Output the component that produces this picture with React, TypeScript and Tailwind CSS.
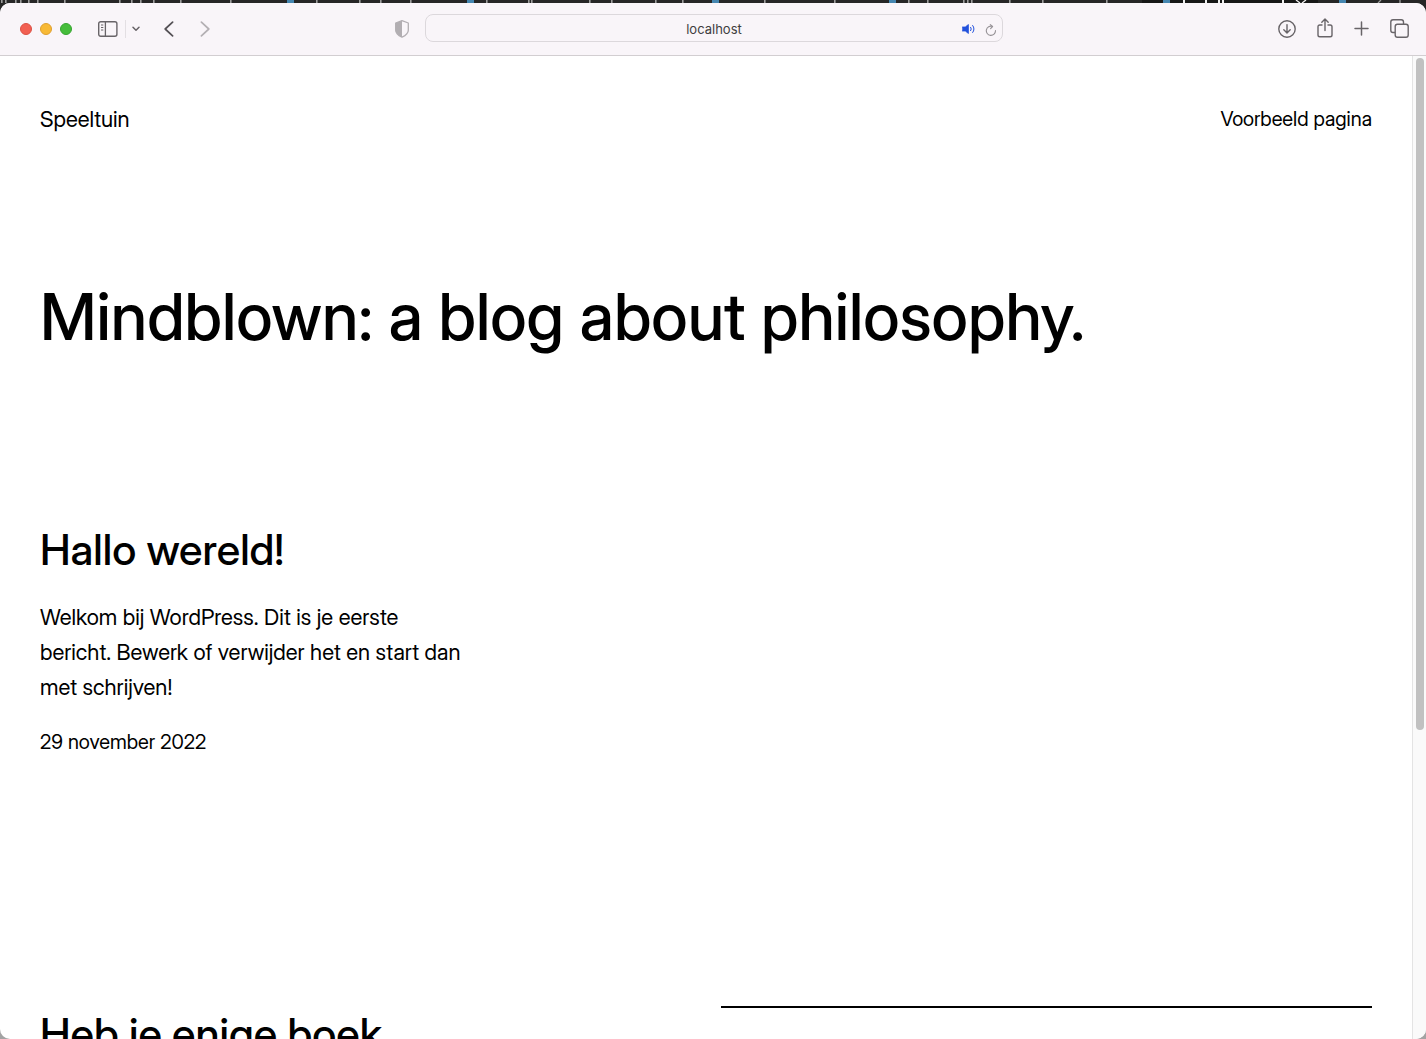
import React from 'react';

const FAVICONS = [287, 467, 712, 889, 1163, 1339];
const TICKS = [
  1, 5, 15, 20, 28, 37, 64, 119, 131, 140, 153, 180, 230, 316, 359, 380, 410, 486, 528, 531, 589, 611, 655, 682,
  764, 834, 908, 927, 963, 967, 971, 1009, 1042, 1106,
];
const ACTIVE_TICKS = [1183, 1205, 1218, 1222, 1282];

function TabStrip() {
  return (
    <svg className="h-[3px] w-full shrink-0" viewBox="0 0 1426 3" preserveAspectRatio="none" aria-hidden="true">
      <rect width="1426" height="3" fill="#262626" />
      <rect x="1142" width="176" height="3" fill="#171717" />
      {FAVICONS.map((x) => <rect key={x} x={x} width="7" height="3" fill="#4586b0" />)}
      {TICKS.map((x) => <rect key={x} x={x} width="1.6" height="3" fill="#9c9c9c" />)}
      {ACTIVE_TICKS.map((x) => <rect key={x} x={x} width="2" height="3" fill="#f0f0f0" />)}
      <path d="M1296 0l4 3M1306 0l-4 3" stroke="#f0f0f0" strokeWidth="1.3" />
      <path d="M1381 0l-3 3M1400 0v3" stroke="#9c9c9c" strokeWidth="1.3" />
    </svg>
  );
}

function Toolbar() {
  return (
    <header className="grid h-[53px] shrink-0 grid-cols-[1fr_578px_1fr] items-center border-b border-[#d2ced1] bg-[#f9f5f9] pl-0.5 text-[#686468]">
      <div className="flex items-center justify-between pr-4 pl-[18px]">
        <div className="flex items-center">
          <div className="flex gap-2">
            <button aria-label="Close" className="size-3 rounded-full border border-[#dc5044] bg-[#f25f52]" />
            <button aria-label="Minimize" className="size-3 rounded-full border border-[#dfa02f] bg-[#f8b935]" />
            <button aria-label="Zoom" className="size-3 rounded-full border border-[#36a530] bg-[#46bd3b]" />
          </div>
          <button aria-label="Sidebar" className="ml-[26px]">
            <svg width="20" height="16" viewBox="0 0 20 16" fill="none" stroke="currentColor" className="block">
              <rect x="0.7" y="0.7" width="18.2" height="14.6" rx="2" strokeWidth="1.4" />
              <path d="M7.4 1v14" strokeWidth="1.3" />
              <path d="M3 4h2.3M3 6.5h2.3M3 9h2.3" strokeWidth="1" />
            </svg>
          </button>
          <span className="ml-[7px] h-[18px] w-px bg-[#e3dfe3]" />
          <button aria-label="Tab groups" className="ml-1.5">
            <svg width="8" height="6" viewBox="0 0 8 6" fill="none" stroke="currentColor" strokeWidth="1.5" strokeLinecap="round" strokeLinejoin="round" className="block">
              <path d="M1 1.3l3 3 3-3" />
            </svg>
          </button>
          <button aria-label="Back" className="ml-6">
            <svg width="10" height="16" viewBox="0 0 10 16" fill="none" stroke="#555156" strokeWidth="1.7" strokeLinecap="round" strokeLinejoin="round" className="block">
              <path d="M8.6 1.2L1.2 8l7.4 6.8" />
            </svg>
          </button>
          <button aria-label="Forward" className="ml-[26px]">
            <svg width="10" height="16" viewBox="0 0 10 16" fill="none" stroke="#b4b0b4" strokeWidth="1.7" strokeLinecap="round" strokeLinejoin="round" className="block">
              <path d="M1.4 1.2L8.8 8l-7.4 6.8" />
            </svg>
          </button>
        </div>
        <button aria-label="Privacy report">
          <svg width="14" height="18" viewBox="0 0 14 18" fill="none" className="block">
            <path d="M7 0.7L13.3 3v7.2c0 3-3 5.4-6.3 7-3.3-1.6-6.3-4-6.3-7V3z" stroke="#b2aeb2" strokeWidth="1.3" strokeLinejoin="round" />
            <path d="M7 0.7L0.7 3v7.2c0 3 3 5.4 6.3 7z" fill="#b2aeb2" />
          </svg>
        </button>
      </div>
      <div className="relative mb-0.5 flex h-7 items-center rounded-lg border border-[#dcd8dc]">
        <input aria-label="Address" defaultValue="localhost" className="h-full w-full bg-transparent pt-0.5 text-center font-['Inter',sans-serif] text-[13px] text-[#403d40] outline-none" />
        <div className="absolute inset-y-0 right-[5px] flex items-center gap-2.5">
          <button aria-label="Mute" className="pt-0.5">
            <svg width="13" height="10" viewBox="0 0 13 10" fill="none" stroke="#2251dc" strokeLinecap="round" className="block">
              <path d="M0.5 3h2.8L6.4 0.5v9L3.3 7H0.5z" fill="#2251dc" strokeWidth="0.8" strokeLinejoin="round" />
              <path d="M8.6 3.3c.8 1 .8 2.4 0 3.4M10.7 1.5c1.7 2 1.7 5 0 7" strokeWidth="1" />
            </svg>
          </button>
          <button aria-label="Reload" className="pt-1">
            <svg width="12" height="12" viewBox="0 0 12 12" fill="none" stroke="#969296" strokeWidth="1.1" strokeLinecap="round" strokeLinejoin="round" className="block">
              <path d="M7.4 2.4A4.6 4.6 0 1 0 10.5 6.6M5.3 0.6l2.3 1.9-2 2.1" />
            </svg>
          </button>
        </div>
      </div>
      <div className="flex items-center justify-end gap-[21px] pr-[17px] pb-px">
        <button aria-label="Downloads">
          <svg width="18" height="18" viewBox="0 0 18 18" fill="none" stroke="currentColor" strokeWidth="1.4" strokeLinecap="round" strokeLinejoin="round" className="block">
            <circle cx="9" cy="9" r="8.2" />
            <path d="M9 4.6v8.2M5.8 9.8L9 13l3.2-3.2" />
          </svg>
        </button>
        <button aria-label="Share" className="pb-0.5">
          <svg width="16" height="20" viewBox="0 0 16 20" fill="none" stroke="currentColor" strokeWidth="1.4" strokeLinecap="round" strokeLinejoin="round" className="block">
            <path d="M5 7H2.8C1.6 7 1 7.6 1 8.8v8.2c0 1.2.6 1.8 1.8 1.8h10.4c1.2 0 1.8-.6 1.8-1.8V8.8C15 7.6 14.4 7 13.2 7H11M8 12.5V1.2M4.8 4.2L8 1l3.2 3.2" />
          </svg>
        </button>
        <button aria-label="New tab">
          <svg width="15" height="15" viewBox="0 0 15 15" fill="none" stroke="currentColor" strokeWidth="1.5" strokeLinecap="round" className="block">
            <path d="M7.5 1v13M1 7.5h13" />
          </svg>
        </button>
        <button aria-label="Tab overview">
          <svg width="19" height="19" viewBox="0 0 19 19" fill="none" stroke="currentColor" strokeWidth="1.4" strokeLinejoin="round" className="block">
            <rect x="5.2" y="5.2" width="13" height="13" rx="2.2" />
            <path d="M5 13.5H3C1.6 13.5.8 12.7.8 11.3V3C.8 1.6 1.6.8 3 .8h8.3c1.4 0 2.2.8 2.2 2.2v2" />
          </svg>
        </button>
      </div>
    </header>
  );
}

export default function App() {
  return (
    <div className="flex h-screen flex-col overflow-hidden bg-[linear-gradient(#262626_50%,#a3a3a3_50%)] font-['Inter_Display',Inter,sans-serif] text-black">
      <TabStrip />
      <div className="flex min-h-0 flex-1 flex-col overflow-hidden rounded-[10px] bg-white">
        <Toolbar />
        <div className="flex min-h-0 flex-1">
          <main className="min-w-0 flex-1 overflow-hidden px-10">
            <nav className="flex items-center justify-between pt-[47px]">
              <a href="#" className="text-[22px] leading-8">Speeltuin</a>
              <a href="#" className="text-[20px] leading-8">Voorbeeld pagina</a>
            </nav>
            <h1 className="mt-[142px] text-[65px] leading-[80px] font-medium">Mindblown: a blog about philosophy.</h1>
            <article className="mt-[167px]">
              <h2 className="text-[43px] leading-[50px] font-medium">Hallo wereld!</h2>
              <p className="mt-[26px] max-w-[426px] text-[22px] leading-[35px]">
                Welkom bij WordPress. Dit is je eerste bericht. Bewerk of verwijder het en start dan met schrijven!
              </p>
              <time dateTime="2022-11-29" className="mt-[22px] block text-[20px] leading-[30px]">29 november 2022</time>
            </article>
            <section className="mt-[249px] grid grid-cols-2 gap-[30px]">
              <h2 className="pt-0.5 text-[43px] leading-[50px] font-medium">Heb je enige boek</h2>
              <hr className="border-t-2 border-black" />
            </section>
          </main>
          <div className="w-[14px] shrink-0 border-l border-[#e4e4e4] bg-[#fafafa] px-[3px] pt-0.5">
            <div className="h-[672px] w-2 rounded-full bg-[#c1c1c1]" />
          </div>
        </div>
      </div>
    </div>
  );
}
